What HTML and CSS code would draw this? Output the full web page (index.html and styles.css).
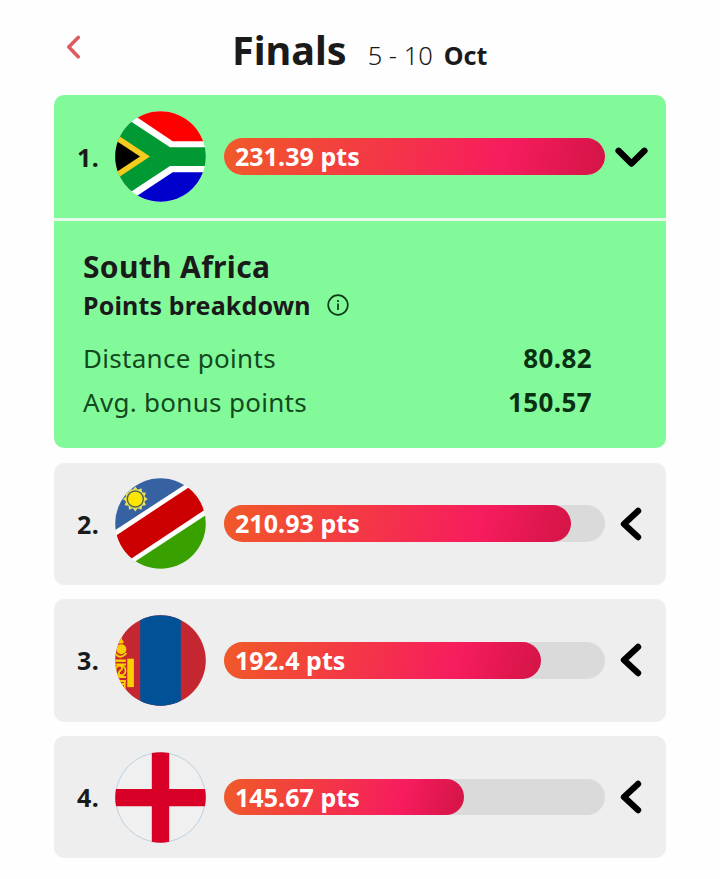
FILE: index.html
```
<!DOCTYPE html>
<html lang="en">
<head>
<meta charset="UTF-8">
<title>Finals</title>
<link rel="stylesheet" href="styles.css">
</head>
<body>

<header class="page-header">
    <button class="back-btn" aria-label="Back">
        <svg width="15" height="24" viewBox="0 0 15 24"><path d="M12.2 2.4 L2.8 12 L12.2 21.8"/></svg>
    </button>
    <h1>Finals</h1>
    <span class="dates">5 - 10</span>
    <span class="month">Oct</span>
</header>

<main class="ranking">
    <section class="card active">
        <div class="card-head">
            <span class="rank">1.</span>
            <svg class="flag" viewBox="0 0 91 91">
                <clipPath id="round"><circle cx="45.5" cy="45.5" r="45.3"/></clipPath>
                <g clip-path="url(#round)">
                    <rect width="91" height="91" fill="#fff"/>
                    <path d="M12.7 0 L57.7 30.2 H91 V0Z" fill="#ff0000"/>
                    <path d="M12.7 91 L57.7 61.2 H91 V91Z" fill="#0000cc"/>
                    <path d="M0 0 L55 36.3 H91 V55 H55 L0 91.3Z" fill="#009933"/>
                    <path d="M0 22.3 L35 45.5 L0 68.7Z" fill="#f5cb1f"/>
                    <path d="M0 29 L25 45.5 L0 62Z" fill="#000"/>
                </g>
            </svg>
            <div class="bar"><div class="fill" style="width: 100%">231.39 pts</div></div>
            <svg class="arrow" viewBox="0 0 36 36"><path d="M4.6 11.8 L17.5 24.6 L30.4 11.8"/></svg>
        </div>
        <div class="breakdown">
            <h2>South Africa</h2>
            <h3>Points breakdown
                <svg class="info" viewBox="0 0 24 24"><circle cx="12" cy="12" r="9.8"/><path d="M12 10.5 V17 M12 7 V9"/></svg>
            </h3>
            <dl>
                <dt>Distance points</dt>
                <dd>80.82</dd>
                <dt>Avg. bonus points</dt>
                <dd>150.57</dd>
            </dl>
        </div>
    </section>

    <section class="card">
        <div class="card-head">
            <span class="rank">2.</span>
            <svg class="flag" viewBox="0 0 91 91">
                <g clip-path="url(#round)">
                    <rect width="91" height="91" fill="#fff"/>
                    <path d="M0 52.2 L80 0 H0Z" fill="#3662a2"/>
                    <path d="M0 58.2 L91 -2 V31 L0 91.4Z" fill="#cc0000"/>
                    <path d="M0 96.7 L91 37 V91Z" fill="#38a100"/>
                    <path d="M20.3 8.6 L22.8 11.8 L26.5 10.3 L27.1 14.2 L31 14.8 L29.5 18.5 L32.7 21 L29.5 23.5 L31 27.2 L27.1 27.8 L26.5 31.7 L22.8 30.2 L20.3 33.4 L17.8 30.2 L14.1 31.7 L13.5 27.8 L9.6 27.2 L11.1 23.5 L7.9 21 L11.1 18.5 L9.6 14.8 L13.5 14.2 L14.1 10.3 L17.8 11.8Z" fill="#e9e05a"/>
                    <circle cx="20.3" cy="21" r="8" fill="#ffe600" stroke="#4f6455" stroke-width="1.4"/>
                </g>
            </svg>
            <div class="bar"><div class="fill" style="width: 91.2%">210.93 pts</div></div>
            <svg class="arrow" viewBox="0 0 36 36"><path d="M24 5 L10 18 L24 31"/></svg>
        </div>
    </section>

    <section class="card">
        <div class="card-head">
            <span class="rank">3.</span>
            <svg class="flag" viewBox="0 0 91 91">
                <g clip-path="url(#round)">
                    <rect width="91" height="91" fill="#c4272f"/>
                    <rect x="25.2" width="40.6" height="91" fill="#015197"/>
                    <g fill="#f9cf02">
                        <rect x="12.3" y="43.7" width="6.6" height="28.4"/>
                        <path d="M3.5 28.5 Q3.5 25.5 7 22.5 Q6.5 25 8.5 26 Q9 28 7.5 28.5Z"/>
                        <circle cx="6.3" cy="34.3" r="5"/>
                        <rect x="0" y="44.5" width="10.8" height="2.4"/>
                        <rect x="0" y="65" width="10.8" height="2"/>
                    </g>
                    <g fill="none" stroke="#f9cf02" stroke-width="1.8">
                        <path d="M-1 37 Q5 46 11.5 38"/>
                        <circle cx="5.5" cy="55.5" r="5"/>
                        <path d="M0 49.5 H11 M0 62 H11"/>
                        <path d="M5.5 50.5 Q9 53 5.5 55.5 T5.5 60.5"/>
                        <path d="M9.7 66 V74 M6.5 69 H10"/>
                    </g>
                </g>
            </svg>
            <div class="bar"><div class="fill" style="width: 83.2%">192.4 pts</div></div>
            <svg class="arrow" viewBox="0 0 36 36"><path d="M24 5 L10 18 L24 31"/></svg>
        </div>
    </section>

    <section class="card">
        <div class="card-head">
            <span class="rank">4.</span>
            <svg class="flag" viewBox="0 0 91 91">
                <circle cx="45.5" cy="45.5" r="44.9" fill="#f0f0f0" stroke="#b4cde0" stroke-width="0.9"/>
                <path clip-path="url(#round)" d="M36.8 0 H54.2 V91 H36.8Z M0 37 H91 V54.2 H0Z" fill="#d80027"/>
            </svg>
            <div class="bar"><div class="fill" style="width: 63%">145.67 pts</div></div>
            <svg class="arrow" viewBox="0 0 36 36"><path d="M24 5 L10 18 L24 31"/></svg>
        </div>
    </section>
</main>

</body>
</html>
```
FILE: styles.css
```
* {
    box-sizing: border-box;
}
body {
    margin: 0;
    padding: 0 54px;
    font-family: "Noto Sans", "Open Sans", sans-serif;
    color: #1a1a1a;
    background-color: #fefefe;
}
.page-header {
    display: flex;
    align-items: baseline;
    height: 95.4px;
    padding: 23px 0 0 12px;
}
.back-btn {
    align-self: flex-start;
    width: 15px;
    height: 24px;
    margin: 12px 151px 0 0;
    padding: 0;
    border: none;
    background: none;
    cursor: pointer;
}
.back-btn svg {
    display: block;
    fill: none;
    stroke: #dc5c62;
    stroke-width: 3.6;
    stroke-linecap: round;
    stroke-linejoin: round;
}
h1 {
    margin: 0;
    font-size: 39.6px;
    line-height: 54px;
}
.dates {
    margin-left: 21px;
    font-size: 25.5px;
    font-weight: 300;
}
.month {
    margin-left: 11px;
    font-size: 25px;
    font-weight: 700;
}
.ranking {
    display: flex;
    flex-direction: column;
    gap: 14.6px;
}
.card {
    border-radius: 10px;
    background-color: #eeeeee;
    overflow: hidden;
}
.card.active {
    background-color: #83fa9a;
}
.card-head {
    display: flex;
    align-items: center;
    height: 122.2px;
    padding-left: 23px;
}
.active .card-head {
    height: 122.6px;
}
.rank {
    width: 38px;
    font-size: 25px;
    font-weight: 700;
    line-height: 36px;
    letter-spacing: 0.4px;
}
.flag {
    width: 91px;
    height: 91px;
    margin-right: 18px;
}
.bar {
    width: 380.5px;
    height: 36.5px;
    border-radius: 19px;
    background-color: #dadada;
}
.fill {
    height: 100%;
    padding-left: 11px;
    border-radius: 19px;
    background: linear-gradient(105deg, #f05a28 0%, #f71c5e 73%, #d31446 100%);
    color: white;
    font-size: 25px;
    font-weight: 700;
    line-height: 36px;
    letter-spacing: 0.05px;
    white-space: nowrap;
}
.arrow {
    width: 36px;
    height: 36px;
    margin-left: 9px;
    fill: none;
    stroke: #000;
    stroke-width: 6.4;
    stroke-linecap: round;
    stroke-linejoin: round;
}
.breakdown {
    height: 230px;
    padding: 24px 74px 0 29px;
    border-top: 3px solid #e3fbe8;
}
h2 {
    margin: 0;
    font-size: 30px;
    line-height: 44px;
    letter-spacing: 0.33px;
}
h3 {
    display: flex;
    align-items: center;
    margin: 0;
    font-size: 25px;
    line-height: 32px;
    letter-spacing: 0.15px;
}
.info {
    width: 24px;
    height: 24px;
    margin-left: 15px;
    fill: none;
    stroke: #0d3a18;
    stroke-width: 1.7;
}
dl {
    display: grid;
    grid-template-columns: 1fr auto;
    margin: 15px 0 0;
    font-size: 26px;
    line-height: 44px;
}
dt {
    color: #124a20;
    letter-spacing: 0.3px;
}
dd {
    margin: 0;
    color: #0a3012;
    font-weight: 700;
    letter-spacing: 0.4px;
    text-align: right;
}
```
